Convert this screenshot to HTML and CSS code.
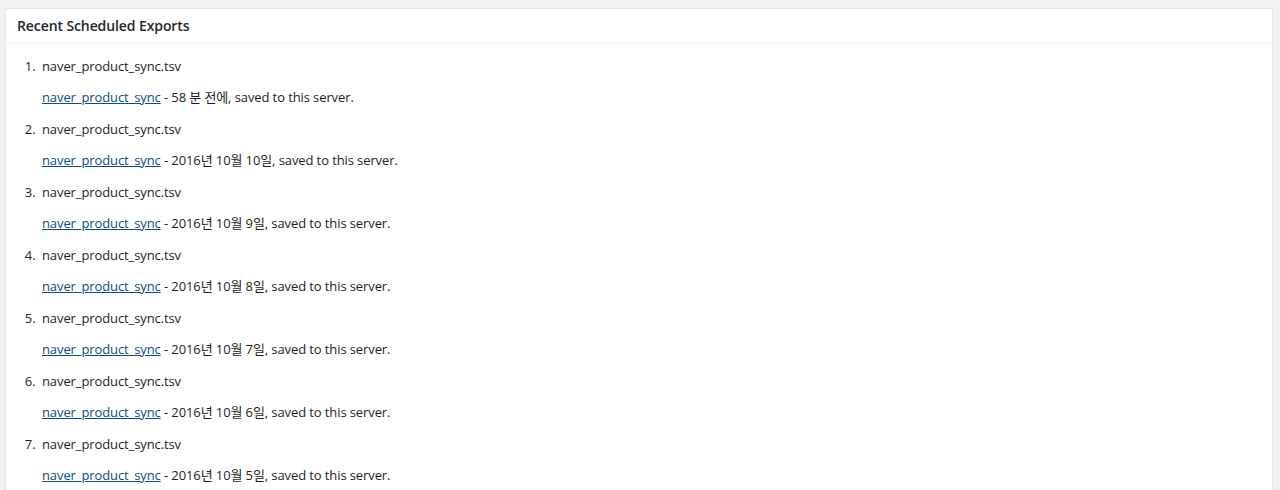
FILE: index.html
```html
<!DOCTYPE html>
<html lang="en">
<head>
    <meta charset="UTF-8">
    <meta name="viewport" content="width=device-width, initial-scale=1.0">
    <title>Recent Scheduled Exports</title>
    <link rel="stylesheet" href="styles.css">
</head>
<body>
    <div class="postbox">
        <h2 class="hndle">Recent Scheduled Exports</h2>
        <div class="inside">
            <ol class="export-list">
                <li>naver_product_sync.tsv
                    <p><a href="#">naver_product_sync</a> - 58 분 전에, saved to this server.</p>
                </li>
                <li>naver_product_sync.tsv
                    <p><a href="#">naver_product_sync</a> - 2016년 10월 10일, saved to this server.</p>
                </li>
                <li>naver_product_sync.tsv
                    <p><a href="#">naver_product_sync</a> - 2016년 10월 9일, saved to this server.</p>
                </li>
                <li>naver_product_sync.tsv
                    <p><a href="#">naver_product_sync</a> - 2016년 10월 8일, saved to this server.</p>
                </li>
                <li>naver_product_sync.tsv
                    <p><a href="#">naver_product_sync</a> - 2016년 10월 7일, saved to this server.</p>
                </li>
                <li>naver_product_sync.tsv
                    <p><a href="#">naver_product_sync</a> - 2016년 10월 6일, saved to this server.</p>
                </li>
                <li>naver_product_sync.tsv
                    <p><a href="#">naver_product_sync</a> - 2016년 10월 5일, saved to this server.</p>
                </li>
                <li>naver_product_sync.tsv
                    <p><a href="#">naver_product_sync</a> - 2016년 10월 4일, saved to this server.</p>
                </li>
            </ol>
        </div>
    </div>
</body>
</html>
```

FILE: styles.css
```css
body {
    font-family: 'Open Sans', 'Noto Sans CJK KR', sans-serif;
    font-size: 13px;
    line-height: 1.5;
    letter-spacing: -0.1px;
    color: #1e1e1e;
    margin: 0;
    padding: 8px 7px 0 5px;
    background-color: #f1f1f1;
}

.postbox {
    background-color: #fff;
    border: 1px solid #e5e5e5;
    box-shadow: 0 1px 1px rgba(0, 0, 0, 0.04);
}

.hndle {
    margin: 0;
    padding: 8px 11px;
    font-size: 14px;
    font-weight: 600;
    line-height: 18px;
    color: #23282d;
    border-bottom: 1px solid #eee;
}

.inside {
    padding: 0 12px 12px;
}

.export-list {
    margin: 12.5px 0 0 24px;
    padding: 0;
}

.export-list li {
    margin: 0;
}

.export-list li::marker {
    content: counter(list-item) ".\00a0\00a0";
}

.export-list p {
    margin: 12px 0;
}

.export-list a {
    color: #0b4d82;
    text-decoration: underline;
}
```
